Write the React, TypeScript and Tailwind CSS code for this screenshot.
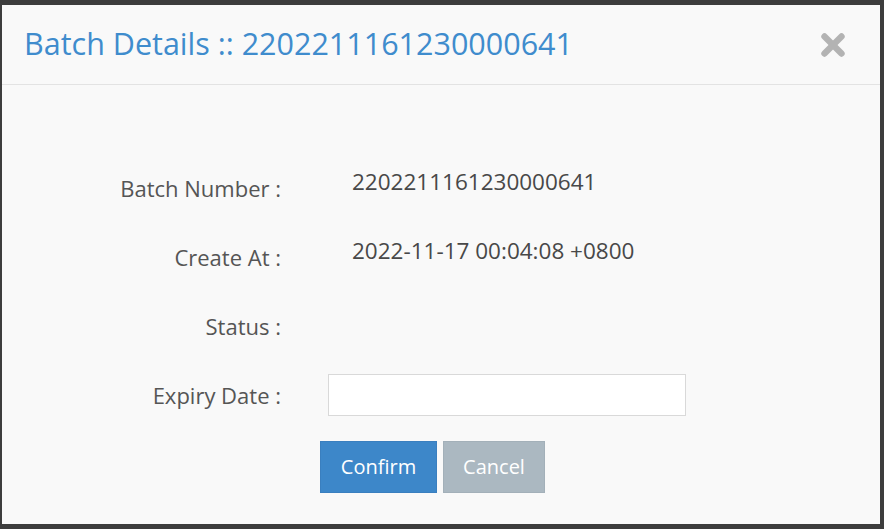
import { X } from "lucide-react";

const rows = [
    { label: "Batch Number :", value: "2202211161230000641" },
    { label: "Create At :", value: "2022-11-17 00:04:08 +0800" },
    { label: "Status :", value: "" },
];

export default function App() {
    return (
        <div
            className="h-[529px] w-[884px] bg-[#3d3d3d] pt-[5px] pl-[2px]"
            style={{ fontFamily: '"Open Sans", sans-serif' }}
        >
            <div className="w-[878px] h-[519px] bg-[#f9f9f9] flex flex-col">
                {/* Header */}
                <div className="h-[80px] flex items-center justify-between pl-[22px] pr-[30px] border-b border-[#e3e3e3]">
                    <h4 className="text-[30.5px] text-[#3f8ccd] leading-none pb-[2px]">
                        Batch Details :: 2202211161230000641
                    </h4>
                    <X className="w-[34px] h-[34px] text-[#b3b3b3]" strokeWidth={4.5} />
                </div>

                {/* Body */}
                <div className="pt-[82px] flex flex-col gap-[27px]">
                    {rows.map((row) => (
                        <div key={row.label} className="flex h-[42px] items-center">
                            <div className="w-[279px] text-right text-[22px] text-[#555]">
                                {row.label}
                            </div>
                            <div className="ml-[47px] pl-[24px] text-[22.5px] text-[#484848] pb-[12px]">
                                {row.value}
                            </div>
                        </div>
                    ))}
                    <div className="flex h-[42px] items-center">
                        <div className="w-[279px] text-right text-[22px] text-[#555]">
                            Expiry Date :
                        </div>
                        <input
                            type="text"
                            className="ml-[47px] w-[358px] h-[42px] bg-white border border-[#d9d9d9] outline-none px-3"
                        />
                    </div>
                </div>

                <div className="flex gap-[6px] pl-[318px] mt-[25px]">
                    <button className="w-[117px] h-[52px] bg-[#3d87c9] border border-[#3a7fbf] text-white text-[20px]">
                        Confirm
                    </button>
                    <button className="w-[102px] h-[52px] bg-[#abb8c1] border border-[#a3b0b9] text-white text-[20px]">
                        Cancel
                    </button>
                </div>
            </div>
        </div>
    );
}
